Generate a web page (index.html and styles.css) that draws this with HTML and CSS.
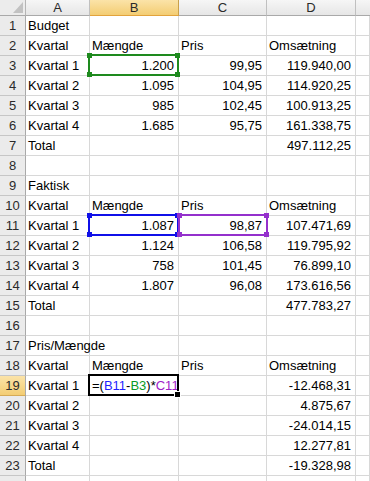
FILE: index.html
```html
<!DOCTYPE html>
<html>
<head>
<meta charset="utf-8">
<link rel="stylesheet" href="styles.css">
</head>
<body>
<div class="sheet">
  <div class="corner"><svg class="tri" width="10" height="11" viewBox="0 0 10 11"><polygon points="10,0 10,11 0,11" fill="#c2c2c2"/></svg></div>
  <div class="ch">A</div><div class="ch sel">B</div><div class="ch">C</div><div class="ch">D</div><div class="ch last"></div>

  <div class="rh">1</div><div class="c">Budget</div><div class="c"></div><div class="c"></div><div class="c"></div><div class="c"></div>
  <div class="rh">2</div><div class="c">Kvartal</div><div class="c">Mængde</div><div class="c">Pris</div><div class="c">Omsætning</div><div class="c"></div>
  <div class="rh">3</div><div class="c">Kvartal 1</div><div class="c n">1.200</div><div class="c n">99,95</div><div class="c n">119.940,00</div><div class="c"></div>
  <div class="rh">4</div><div class="c">Kvartal 2</div><div class="c n">1.095</div><div class="c n">104,95</div><div class="c n">114.920,25</div><div class="c"></div>
  <div class="rh">5</div><div class="c">Kvartal 3</div><div class="c n">985</div><div class="c n">102,45</div><div class="c n">100.913,25</div><div class="c"></div>
  <div class="rh">6</div><div class="c">Kvartal 4</div><div class="c n">1.685</div><div class="c n">95,75</div><div class="c n">161.338,75</div><div class="c"></div>
  <div class="rh">7</div><div class="c">Total</div><div class="c"></div><div class="c"></div><div class="c n">497.112,25</div><div class="c"></div>
  <div class="rh">8</div><div class="c"></div><div class="c"></div><div class="c"></div><div class="c"></div><div class="c"></div>
  <div class="rh">9</div><div class="c">Faktisk</div><div class="c"></div><div class="c"></div><div class="c"></div><div class="c"></div>
  <div class="rh">10</div><div class="c">Kvartal</div><div class="c">Mængde</div><div class="c">Pris</div><div class="c">Omsætning</div><div class="c"></div>
  <div class="rh">11</div><div class="c">Kvartal 1</div><div class="c n">1.087</div><div class="c n">98,87</div><div class="c n">107.471,69</div><div class="c"></div>
  <div class="rh">12</div><div class="c">Kvartal 2</div><div class="c n">1.124</div><div class="c n">106,58</div><div class="c n">119.795,92</div><div class="c"></div>
  <div class="rh">13</div><div class="c">Kvartal 3</div><div class="c n">758</div><div class="c n">101,45</div><div class="c n">76.899,10</div><div class="c"></div>
  <div class="rh">14</div><div class="c">Kvartal 4</div><div class="c n">1.807</div><div class="c n">96,08</div><div class="c n">173.616,56</div><div class="c"></div>
  <div class="rh">15</div><div class="c">Total</div><div class="c"></div><div class="c"></div><div class="c n">477.783,27</div><div class="c"></div>
  <div class="rh">16</div><div class="c"></div><div class="c"></div><div class="c"></div><div class="c"></div><div class="c"></div>
  <div class="rh">17</div><div class="c">Pris/Mængde</div><div class="c"></div><div class="c"></div><div class="c"></div><div class="c"></div>
  <div class="rh">18</div><div class="c">Kvartal</div><div class="c">Mængde</div><div class="c">Pris</div><div class="c">Omsætning</div><div class="c"></div>
  <div class="rh sel">19</div><div class="c">Kvartal 1</div><div class="c formula">=(<span class="ref-b">B11</span>-<span class="ref-g">B3</span>)*<span class="ref-p">C11</span></div><div class="c"></div><div class="c n">-12.468,31</div><div class="c"></div>
  <div class="rh">20</div><div class="c">Kvartal 2</div><div class="c"></div><div class="c"></div><div class="c n">4.875,67</div><div class="c"></div>
  <div class="rh">21</div><div class="c">Kvartal 3</div><div class="c"></div><div class="c"></div><div class="c n">-24.014,15</div><div class="c"></div>
  <div class="rh">22</div><div class="c">Kvartal 4</div><div class="c"></div><div class="c"></div><div class="c n">12.277,81</div><div class="c"></div>
  <div class="rh">23</div><div class="c">Total</div><div class="c"></div><div class="c"></div><div class="c n">-19.328,98</div><div class="c"></div>
  <div class="rh"></div><div class="c"></div><div class="c"></div><div class="c"></div><div class="c"></div><div class="c"></div>

  <div class="box box-green"><i class="h tl"></i><i class="h tr"></i><i class="h bl"></i><i class="h br"></i></div>
  <div class="box box-blue"><i class="h tl"></i><i class="h tr"></i><i class="h bl"></i><i class="h br"></i></div>
  <div class="box box-purple"><i class="h tl"></i><i class="h tr"></i><i class="h bl"></i><i class="h br"></i></div>
  <div class="active"><i class="fill"></i></div>
</div>
</body>
</html>
```

FILE: styles.css
```css
html, body {
  margin: 0;
  padding: 0;
  background: #fff;
  overflow: hidden;
}

.sheet {
  position: relative;
  display: grid;
  grid-template-columns: 26px 64px 89px 88px 89px 1fr;
  grid-template-rows: 16px repeat(24, 20px);
  width: 370px;
  height: 481px;
  overflow: hidden;
  font-family: "Liberation Sans", Arial, sans-serif;
  font-size: 13px;
  color: #000;
  background: #fff;
}

.corner {
  position: relative;
  background: #ececec;
  border-right: 1px solid #b5b5b5;
  border-bottom: 1px solid #a9a9a9;
  box-sizing: border-box;
}

.tri {
  position: absolute;
  right: 2px;
  bottom: 2px;
}

.ch {
  box-sizing: border-box;
  background: linear-gradient(#f6f6f6, #e6e6e6);
  border-right: 1px solid #c0c0c0;
  border-bottom: 1px solid #a9a9a9;
  text-align: center;
  line-height: 15px;
  color: #2a2a2a;
}

.ch.sel {
  background: linear-gradient(#fbe3a8, #f3cd73);
  border-right-color: #c9a04a;
  border-bottom-color: #e2a33c;
}

.ch.last {
  border-right: none;
}

.rh {
  box-sizing: border-box;
  background: #ebebeb;
  border-right: 1px solid #a9a9a9;
  border-bottom: 1px solid #c6c6c6;
  text-align: center;
  line-height: 19px;
  color: #2a2a2a;
}

.rh.sel {
  background: linear-gradient(#fbe3a8, #f3cd73);
  border-bottom-color: #d5aa55;
}

.c {
  box-sizing: border-box;
  border-right: 1px solid #d8d8d8;
  border-bottom: 1px solid #d8d8d8;
  line-height: 19px;
  padding: 0 2px;
  white-space: nowrap;
  overflow: visible;
}

.n {
  text-align: right;
  padding-right: 4px;
}

.formula {
  position: relative;
  z-index: 1;
  padding-left: 2px;
}

.ref-b { color: #1f1fff; }
.ref-g { color: #0a9a24; }
.ref-p { color: #a020c8; }

.box {
  position: absolute;
  box-sizing: border-box;
  border: 2px solid;
  z-index: 2;
}

.box-green {
  left: 88px;
  top: 54px;
  width: 91px;
  height: 22px;
  border-color: #1e8a1e;
  color: #1e8a1e;
}

.box-blue {
  left: 88px;
  top: 214px;
  width: 91px;
  height: 22px;
  border-color: #1010e8;
  color: #1010e8;
}

.box-purple {
  left: 178px;
  top: 214px;
  width: 90px;
  height: 22px;
  border-color: #9430cc;
  color: #9430cc;
}

.h {
  position: absolute;
  width: 5px;
  height: 5px;
  background: currentColor;
}

.h.tl { left: -3px; top: -3px; }
.h.tr { right: -3px; top: -3px; }
.h.bl { left: -3px; bottom: -3px; }
.h.br { right: -3px; bottom: -3px; }

.active {
  position: absolute;
  left: 88px;
  top: 374px;
  width: 91px;
  height: 22px;
  box-sizing: border-box;
  border: 2px solid #000;
  z-index: 3;
}

.fill {
  position: absolute;
  right: -4px;
  bottom: -4px;
  width: 5px;
  height: 5px;
  background: #000;
  border: 1px solid #fff;
}
```
